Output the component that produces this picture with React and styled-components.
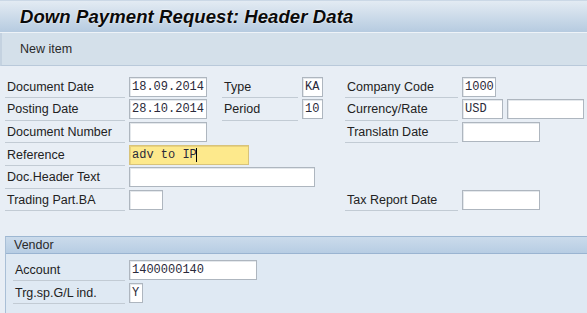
import React from 'react';
import styled, { createGlobalStyle } from 'styled-components';

const Global = createGlobalStyle`
  body { margin: 0; background: #e8eef5; }
`

const Page = styled.div`
  width: 587px;
  height: 313px;
  overflow: hidden;
  background: #e8eef5;
  font-family: 'Liberation Sans', Arial, sans-serif;
  font-size: 12.5px;
  color: #222;
`
const TitleBar = styled.div`
  height: 33px;
  box-sizing: border-box;
  display: flex;
  align-items: center;
  padding-left: 20px;
  background: linear-gradient(#e3ebf3, #b6cbe0);
  border-top: 1px solid #cbd8e6;
  border-bottom: 1px solid #eef3f8;
`
const Title = styled.h1`
  margin: 0;
  font-size: 18.5px;
  font-weight: bold;
  font-style: italic;
  color: #0a0a0a;
  text-shadow: 0 0 2px #ffffff;
  letter-spacing: 0.1px;
`
const Toolbar = styled.div`
  height: 33px;
  box-sizing: border-box;
  display: flex;
  align-items: center;
  padding-left: 18px;
  background: #d4e0ea;
  border-left: 2px solid #c4d2e0;
  border-bottom: 1px solid #b9c9da;
  color: #2a2a2a;
`
const Form = styled.div`
  display: grid;
  grid-template-columns: 124px 93px 80px 43px 117px auto;
  grid-auto-rows: 22.7px;
  padding: 10px 0 0 5px;
`
const Label = styled.div`
  grid-column: ${p => p.col || 1};
  margin-right: 4px;
  padding-left: 2px;
  display: flex;
  align-items: center;
  border-bottom: 1px solid #c2cbd4;
  box-sizing: border-box;
  height: 22px;
  white-space: nowrap;
`
const Cell = styled.div`
  grid-column: ${p => p.col || 2} / span ${p => p.span || 1};
  display: flex;
  gap: 4px;
  align-items: center;
  height: 21px;
`
const Input = styled.div`
  width: ${p => p.w}px;
  height: 20px;
  box-sizing: border-box;
  flex-shrink: 0;
  background: ${p => (p.focus ? '#fde98c' : '#ffffff')};
  border: 1px solid ${p => (p.focus ? '#d8c37a' : '#aeb6bf')};
  box-shadow: inset 1px 1px 0 ${p => (p.focus ? '#e9d27c' : '#e4e8ec')};
  font-family: 'Liberation Mono', 'Courier New', monospace;
  font-size: 12px;
  color: #2a2a3a;
  padding-left: 2px;
  display: flex;
  align-items: center;
  white-space: pre;
`
const Caret = styled.span`
  display: inline-block;
  width: 1px;
  height: 14px;
  background: #000;
  margin-left: -1px;
`
const Group = styled.div`
  margin: 24px 0 0 5px;
  border-left: 1px solid #a9bfd6;
  border-top: 1px solid #9db7d2;
  background: #dfe9f3;
  height: 100px;
`
const GroupHead = styled.div`
  height: 16px;
  display: flex;
  align-items: center;
  padding-left: 8px;
  background: linear-gradient(#cbdbeb, #b7cde3);
  border-bottom: 1px solid #9ab4d1;
  color: #2a2a2a;
`
const GroupBody = styled.div`
  display: grid;
  grid-template-columns: 116px auto;
  grid-auto-rows: 23px;
  padding: 5px 0 0 7px;
`

const App = () => {
  return (
    <Page>
      <Global />
      <TitleBar>
        <Title>Down Payment Request: Header Data</Title>
      </TitleBar>
      <Toolbar>New item</Toolbar>
      <Form>
        <Label>Document Date</Label>
        <Cell><Input w={78}>18.09.2014</Input></Cell>
        <Label col={3}>Type</Label>
        <Cell col={4}><Input w={21}>KA</Input></Cell>
        <Label col={5}>Company Code</Label>
        <Cell col={6}><Input w={34}>1000</Input></Cell>

        <Label>Posting Date</Label>
        <Cell><Input w={78}>28.10.2014</Input></Cell>
        <Label col={3}>Period</Label>
        <Cell col={4}><Input w={21}>10</Input></Cell>
        <Label col={5}>Currency/Rate</Label>
        <Cell col={6}><Input w={41}>USD</Input><Input w={77} /></Cell>

        <Label>Document Number</Label>
        <Cell><Input w={78} /></Cell>
        <Label col={5}>Translatn Date</Label>
        <Cell col={6}><Input w={78} /></Cell>

        <Label>Reference</Label>
        <Cell span={3}><Input w={120} focus>adv to IP<Caret /></Input></Cell>

        <Label>Doc.Header Text</Label>
        <Cell span={3}><Input w={186} /></Cell>

        <Label>Trading Part.BA</Label>
        <Cell><Input w={34} /></Cell>
        <Label col={5}>Tax Report Date</Label>
        <Cell col={6}><Input w={78} /></Cell>
      </Form>
      <Group>
        <GroupHead>Vendor</GroupHead>
        <GroupBody>
          <Label>Account</Label>
          <Cell><Input w={128}>1400000140</Input></Cell>
          <Label>Trg.sp.G/L ind.</Label>
          <Cell><Input w={14}>Y</Input></Cell>
        </GroupBody>
      </Group>
    </Page>
  );
}
export default App;
